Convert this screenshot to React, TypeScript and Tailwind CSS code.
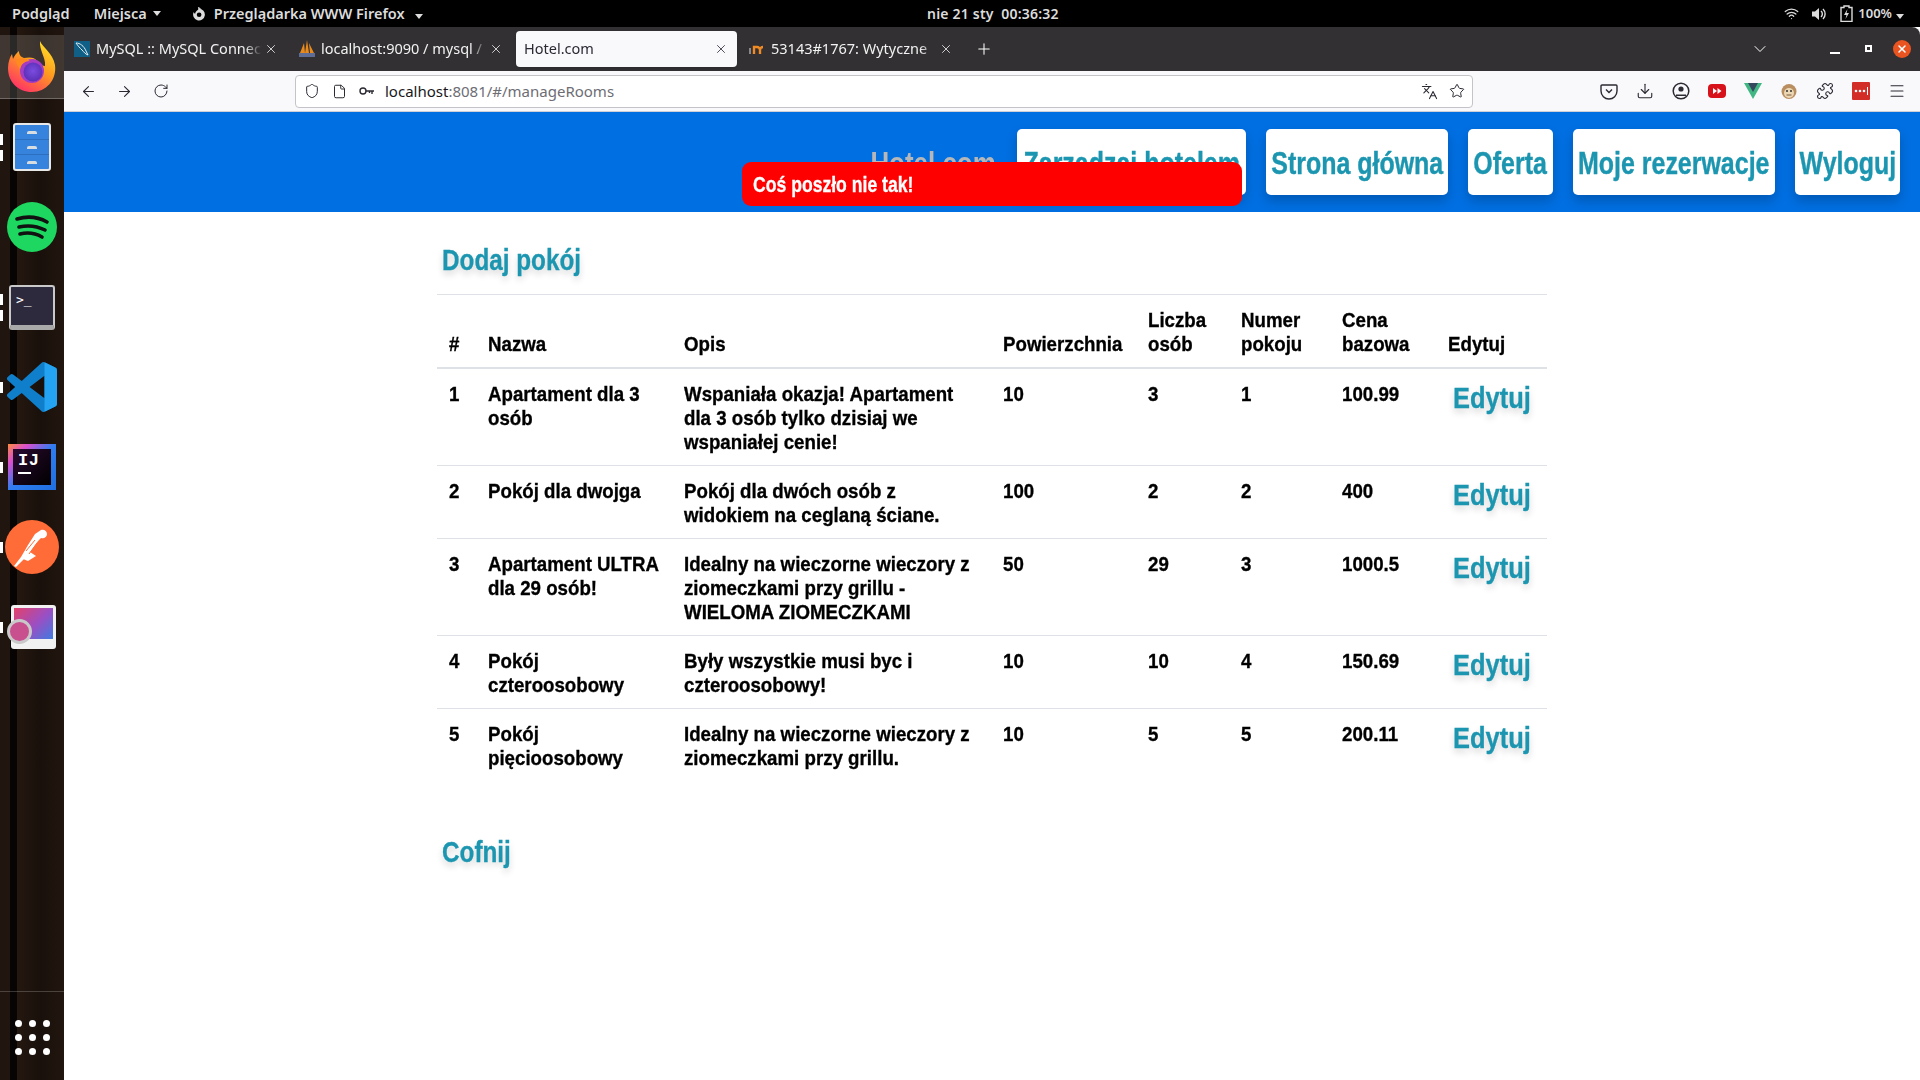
import React from 'react';
import { ArrowLeft, ArrowRight, RotateCw, Shield, File, Star, Languages, Download, Puzzle, Menu, X, Plus, ChevronDown, Wifi } from 'lucide-react';

const rooms = [
  { id: 1, name: 'Apartament dla 3 osób', desc: 'Wspaniała okazja! Apartament dla 3 osób tylko dzisiaj we wspaniałej cenie!', area: '10', people: '3', no: '1', price: '100.99' },
  { id: 2, name: 'Pokój dla dwojga', desc: 'Pokój dla dwóch osób z widokiem na ceglaną ściane.', area: '100', people: '2', no: '2', price: '400' },
  { id: 3, name: 'Apartament ULTRA dla 29 osób!', desc: 'Idealny na wieczorne wieczory z ziomeczkami przy grillu - WIELOMA ZIOMECZKAMI', area: '50', people: '29', no: '3', price: '1000.5' },
  { id: 4, name: 'Pokój czteroosobowy', desc: 'Były wszystkie musi byc i czteroosobowy!', area: '10', people: '10', no: '4', price: '150.69' },
  { id: 5, name: 'Pokój pięcioosobowy', desc: 'Idealny na wieczorne wieczory z ziomeczkami przy grillu.', area: '10', people: '5', no: '5', price: '200.11' },
];

const navItems = [
  { label: 'Zarządzaj hotelem', width: 'w-[229px]' },
  { label: 'Strona główna', width: 'w-[182px]' },
  { label: 'Oferta', width: 'w-[85px]' },
  { label: 'Moje rezerwacje', width: 'w-[202px]' },
  { label: 'Wyloguj', width: 'w-[105px]' },
];

const Caret = () => <span className="inline-block w-0 h-0 border-x-[4px] border-x-transparent border-t-[5px] border-t-[#dddddd]" />;

const DockSlot = ({ children, marks = 0 }: { children: React.ReactNode; marks?: number }) => (
  <div className="relative h-[80px] flex items-center justify-center shrink-0">
    {marks > 0 && (
      <div className="absolute left-0 top-0 bottom-0 flex flex-col justify-center gap-[5px]">
        {Array.from({ length: marks }).map((_, i) => <span key={i} className="block w-[3px] h-[11px] bg-white" />)}
      </div>
    )}
    {children}
  </div>
);

const FirefoxLogo = () => (
  <svg width="52" height="54" viewBox="0 0 52 54">
    <defs>
      <linearGradient id="ffa" x1="0.8" y1="0" x2="0.2" y2="1"><stop offset="0" stopColor="#ffe226" /><stop offset="0.45" stopColor="#ff9a1f" /><stop offset="1" stopColor="#ff2a6d" /></linearGradient>
      <radialGradient id="ffb" cx="0.5" cy="0.45" r="0.55"><stop offset="0" stopColor="#7b4ce0" /><stop offset="1" stopColor="#5b2fb5" /></radialGradient>
    </defs>
    <path d="M34 1c2 6 13 12 15 24 2 15-9 27-23 27C12 52 2 42 2 28c0-6 2-11 4-14l1 5c2-5 6-8 6-8 0 4 2 6 5 7 5-1 11-1 13 3-6-4-9 2-9 2l17 3C40 18 33 10 34 1z" fill="url(#ffa)" />
    <circle cx="26" cy="31" r="12" fill="#a63bc4" />
    <circle cx="27" cy="32" r="9.5" fill="url(#ffb)" />
    <path d="M10 20c6-3 10-2 14 1-5 0-9 3-10 8-2-3-4-5-4-9z" fill="#ff8a1f" />
  </svg>
);

const FilesIcon = () => (
  <div className="w-[38px] h-[48px] rounded-[3px] bg-[#3583dd] border-2 border-[#e8e8e8] flex flex-col">
    {[0, 1, 2].map(i => (
      <div key={i} className="flex-1 flex items-center justify-center border-b border-[#2c6fc0] last:border-b-0">
        <span className="block w-[10px] h-[3px] rounded-t-[2px] bg-[#d8dde2]" />
      </div>
    ))}
  </div>
);

const SpotifyIcon = () => (
  <svg width="50" height="50" viewBox="0 0 50 50">
    <circle cx="25" cy="25" r="25" fill="#1ed760" />
    <path d="M10 17c10-3 21-2 30 3M12 25c9-2 18-1 26 3M13 32c8-2 15-1 22 3" fill="none" stroke="#111" strokeWidth="3.6" strokeLinecap="round" />
  </svg>
);

const TerminalIcon = () => (
  <div className="w-[46px] h-[45px] rounded-[3px] bg-[#2c2a3c] border-2 border-[#c9c9c9] border-b-[5px] border-b-[#a9a9a9] pl-[5px] pt-[3px] leading-none">
    <span className="text-white text-[13px] font-['DejaVu_Sans_Mono',monospace]">&gt;_</span>
  </div>
);

const VsCodeIcon = () => (
  <svg width="50" height="50" viewBox="0 0 100 100">
    <path d="M70.9 99.3a6.2 6.2 0 0 0 5-.2l20.6-9.9a6.2 6.2 0 0 0 3.500-5.600V16.400a6.200 6.200 0 0 0-3.500-5.600L75.900.9a6.200 6.200 0 0 0-7.100 1.200L29.400 38 12.200 25a4.200 4.200 0 0 0-5.300.2l-5.500 5a4.200 4.200 0 0 0 0 6.200L16.300 50 1.400 63.600a4.200 4.200 0 0 0 0 6.200l5.500 5a4.200 4.200 0 0 0 5.300.2l17.200-13 39.400 36a6.200 6.200 0 0 0 2.100 1.300zM75 27.300 45.100 50 75 72.700z" fill="#0f7fcb" fillRule="evenodd" />
    <path d="M75 0.500l21.500 10.300a6.200 6.200 0 0 1 3.500 5.600v67.200a6.200 6.200 0 0 1-3.500 5.600L75 99.500z" fill="#24a3f2" />
  </svg>
);

const IdeaIcon = () => (
  <div className="w-[48px] h-[46px] p-[5px] bg-[linear-gradient(135deg,#ff8a3d_0%,#d94fd0_22%,#2f7df0_50%,#1f6fe0_100%)]">
    <div className="w-full h-full bg-[linear-gradient(135deg,#2a0a30,#000000)] pl-[5px] pt-[3px] flex flex-col">
      <span className="text-white text-[17px] leading-[17px] font-bold tracking-[0.5px] font-['Liberation_Mono',monospace]">IJ</span>
      <span className="block w-[13px] h-[2px] bg-white mt-[3px]" />
    </div>
  </div>
);

const PostmanIcon = () => (
  <svg width="54" height="54" viewBox="0 0 54 54">
    <circle cx="27" cy="27" r="27" fill="#ff6c37" />
    <path d="M36 10c3-1 6 1 6 4s-3 5-6 4l-3 3-10 14-9 9-3 3-2-1 7-9 7-12 7-11z" fill="#ffffff" />
    <path d="M25 32l6 4-8 5-5-2z" fill="#ffffff" />
    <path d="M21 31l9-11M24 34l8-11" stroke="#ff6c37" strokeWidth="1" />
  </svg>
);

const ShotIcon = () => (
  <div className="relative w-[46px] h-[44px] ml-[1px]">
    <div className="absolute right-0 top-0 w-[45px] h-[44px] rounded-[3px] bg-[#f1f1f1] p-[3px] pb-[10px]">
      <div className="w-full h-full bg-[linear-gradient(135deg,#e4416a,#9a4fc4_55%,#3f7be0)]" />
    </div>
    <div className="absolute -left-[3px] top-[14px] w-[25px] h-[25px] rounded-full bg-[#c8508f] border-[3px] border-[#c9c9c9]" />
  </div>
);

const BrowserTab = ({ title, icon, active = false }: { title: string; icon?: React.ReactNode; active?: boolean }) => (
  <div className={`w-[221px] h-[36px] rounded-[4px] flex items-center pl-2 pr-[9px] gap-[6px] shrink-0 ${active ? 'bg-[#f9f9fb] text-[#2b2a33] shadow-sm' : 'text-[#f2f2f2]'}`}>
    {icon && <span className="w-4 h-4 shrink-0 flex items-center justify-center">{icon}</span>}
    <span className="flex-1 min-w-0 -mr-[4px] whitespace-nowrap overflow-hidden text-[14.5px] font-['Noto_Sans',sans-serif] [mask-image:linear-gradient(90deg,#000_90%,transparent)]">{title}</span>
    <X size={14} strokeWidth={1.4} className="shrink-0" />
  </div>
);

const MysqlFav = () => (
  <svg width="16" height="16" viewBox="0 0 16 16">
    <rect width="16" height="16" fill="#0f5f86" />
    <path d="M2 2c4 0 8 3 10 8l2 4c-3-1-4-3-6-5C6 7 4 5 2 2z" fill="none" stroke="#e6eef3" strokeWidth="1" />
  </svg>
);

const PmaFav = () => (
  <svg width="16" height="18" viewBox="0 0 16 18">
    <path d="M1 13 5 3l1 10zM6 13 8 0l2 13zM11 13l-1-10 5 10z" fill="#e98a1d" />
    <rect x="0" y="13" width="16" height="4" fill="#5d6d96" />
  </svg>
);

const MoodleFav = () => (
  <svg width="16" height="12" viewBox="0 0 16 12">
    <path d="M1 11V5" stroke="#888" strokeWidth="2" />
    <path d="M5 11V4h3a3 3 0 0 1 3 3v4M11 11V7a3 3 0 0 1 3-3" fill="none" stroke="#f08a24" strokeWidth="2.4" />
  </svg>
);

const tool = 'text-[#2b2a33] shrink-0';

// the site's condensed font isn't installed, so the text gets squeezed
const Squeezed = ({ children }: { children: React.ReactNode }) => (
  <div className="w-[112.36%] origin-left scale-x-[0.89]">{children}</div>
);

const PageLink = ({ children, className = '' }: { children: React.ReactNode; className?: string }) => (
  <a className={`block w-fit ml-[5px] origin-left font-bold text-[#1c96b0] whitespace-nowrap [-webkit-text-stroke:0.3px] [text-shadow:0_4px_8px_rgba(0,0,0,0.18)] ${className}`}>{children}</a>
);

const App = () => {
  const sans = "font-['Noto_Sans',sans-serif]";
  const narrow = "font-['Liberation_Sans',sans-serif]";

  return (
    <div className="w-screen h-screen overflow-hidden flex flex-col bg-black">
      {/* ubuntu top bar */}
      <div className={`h-[27px] shrink-0 bg-black text-[#dcdcdc] text-[14.5px] font-semibold relative flex items-center ${sans}`}>
        <span className="ml-3">Podgląd</span>
        <span className="ml-[24px] flex items-center gap-[6px]">Miejsca <Caret /></span>
        <span className="ml-[30px] flex items-center gap-[7px]">
          <svg width="16" height="16" viewBox="0 0 15 15"><path d="M7.5 2.5a5.5 5.5 0 1 1-5 3.2c.3 1 .9 1.4 1.4 1.6.2-1.7 1.3-3 2.8-3.8.2-1 .1-2-.3-2.6 1.4.3 2.4.9 3 1.8a4 4 0 0 0-1.9-.2z" fill="#dcdcdc" /><circle cx="7.6" cy="8.2" r="2.2" fill="#000" /></svg>
          Przeglądarka WWW Firefox
          <span className="ml-[3px]"><Caret /></span>
        </span>
        <span className="absolute left-[927px] text-[14px] tracking-[0.2px]">nie 21 sty&nbsp;&nbsp;00:36:32</span>
        <div className="ml-auto mr-[16px] flex items-center">
          <Wifi size={15} strokeWidth={2} />
          <svg width="16" height="16" viewBox="0 0 16 16" className="ml-[12px]"><path d="M1 5.500h3L8 2v12l-4-3.500H1z" fill="#dcdcdc" /><path d="M10 5a4 4 0 0 1 0 6M12 3a7 7 0 0 1 0 10" fill="none" stroke="#dcdcdc" strokeWidth="1.400" /></svg>
          <svg width="13" height="17" viewBox="0 0 13 17" className="ml-[13px]"><path d="M4 1h5v1.500h3v14H1v-14h3z" fill="none" stroke="#dcdcdc" strokeWidth="1.400" /><path d="M7.500 4 4 10h2.500L5.500 14 9 8H6.500z" fill="#dcdcdc" /></svg>
          <span className="ml-[5px] text-[13px]">100%</span>
          <span className="ml-[4px]"><Caret /></span>
        </div>
      </div>

      <div className="flex-1 min-h-0 flex">
        {/* dock */}
        <div className="w-[64px] shrink-0 relative flex flex-col bg-[linear-gradient(90deg,#20150f_0px,#20150f_10px,#070403_10px,#070403_17px,#241810_17px,#1a100b_40px,#21160f_64px)]">
          <div className="absolute left-0 right-0 top-[8px] h-[64px] bg-white/15 border-b border-white/25" />
          <DockSlot marks={0}><span className="relative"><FirefoxLogo /></span></DockSlot>
          <DockSlot marks={2}><FilesIcon /></DockSlot>
          <DockSlot><SpotifyIcon /></DockSlot>
          <DockSlot marks={2}><TerminalIcon /></DockSlot>
          <DockSlot marks={1}><VsCodeIcon /></DockSlot>
          <DockSlot marks={1}><IdeaIcon /></DockSlot>
          <DockSlot marks={1}><PostmanIcon /></DockSlot>
          <DockSlot marks={1}><ShotIcon /></DockSlot>
          <div className="mt-auto border-t border-white/20 h-[89px] flex items-start justify-center pt-[28px]">
            <div className="grid grid-cols-3 gap-x-[7px] gap-y-[7px]">
              {Array.from({ length: 9 }).map((_, i) => <span key={i} className="block w-[7px] h-[7px] rounded-full bg-white" />)}
            </div>
          </div>
        </div>

        <div className="flex-1 min-w-0 flex flex-col bg-white">
          {/* tab strip */}
          <div className="h-[44px] shrink-0 bg-[#323032] rounded-tr-[8px] flex items-center pl-[2px] gap-1 text-white">
            <BrowserTab title="MySQL :: MySQL Connectors" icon={<MysqlFav />} />
            <BrowserTab title="localhost:9090 / mysql / hotel" icon={<PmaFav />} />
            <BrowserTab title="Hotel.com" active />
            <BrowserTab title="53143#1767: Wytyczne" icon={<MoodleFav />} />
            <Plus size={18} strokeWidth={1.4} className="ml-[9px]" />
            <ChevronDown size={20} strokeWidth={1.2} className="ml-auto mr-[56px]" />
            <span className="flex items-center mr-[9px]">
              <span className="block w-[10px] h-[2px] bg-white mt-[7px]" />
              <span className="block w-[7px] h-[7px] border-2 border-white ml-[25px] -mt-[1px]" />
              <span className="w-[18px] h-[18px] rounded-full bg-[#e95420] ml-[21px] flex items-center justify-center"><X size={12} strokeWidth={3} /></span>
            </span>
          </div>

          {/* toolbar */}
          <div className="h-[41px] shrink-0 bg-[#f9f9fb] border-b border-[#cfcfd8] flex items-center">
            <ArrowLeft size={17} strokeWidth={1.5} className={`${tool} ml-[16px]`} />
            <ArrowRight size={17} strokeWidth={1.5} className={`${tool} ml-[19px]`} />
            <RotateCw size={16} strokeWidth={1.5} className={`${tool} ml-[20px]`} />
            <div className="ml-[126px] w-[1178px] h-[33px] bg-white border border-[#c4c4c8] rounded-[4px] flex items-center pl-[8px] pr-[7px]">
              <Shield size={16} strokeWidth={1.5} className={tool} />
              <File size={15} strokeWidth={1.6} className={`${tool} ml-[12px]`} />
              <svg width="16" height="10" viewBox="0 0 16 10" className="ml-[12px] shrink-0"><circle cx="4" cy="5" r="3" fill="none" stroke="#2b2a33" strokeWidth="1.4" /><path d="M7 5h8M13 5v3M10.500 5v2" fill="none" stroke="#2b2a33" strokeWidth="1.4" /></svg>
              <span className={`ml-[10px] text-[15px] text-[#6d6d74] ${sans}`}><span className="text-[#18181b]">localhost</span>:8081/#/manageRooms</span>
              <Languages size={17} strokeWidth={1.5} className={`${tool} ml-auto`} />
              <Star size={16} strokeWidth={1.5} className={`${tool} ml-[11px]`} />
            </div>
            <div className="ml-[127px] flex items-center gap-[18px]">
              <svg width="18" height="18" viewBox="0 0 18 18" className="shrink-0"><path d="M2 3h14a1 1 0 0 1 1 1v5a8 8 0 0 1-16 0V4a1 1 0 0 1 1-1z" fill="none" stroke="#2b2a33" strokeWidth="1.4" /><path d="M6 7.5l3 3 3-3" fill="none" stroke="#2b2a33" strokeWidth="1.4" /></svg>
              <Download size={18} strokeWidth={1.5} className={tool} />
              <svg width="18" height="18" viewBox="0 0 18 18" className="shrink-0"><circle cx="9" cy="9" r="7.800" fill="none" stroke="#2b2a33" strokeWidth="1.5" /><circle cx="9" cy="7" r="2.600" fill="#2b2a33" /><path d="M4 12.500h10v1.500H4z" fill="#2b2a33" /></svg>
              <svg width="18" height="14" viewBox="0 0 18 14" className="shrink-0"><rect width="18" height="14" rx="4" fill="#d8121b" /><path d="M5 4l4 3-4 3zM9.500 4l4 3-4 3z" fill="#fff" /></svg>
              <svg width="18" height="16" viewBox="0 0 18 16" className="shrink-0"><path d="M0 0h18L9 16z" fill="#41b883" /><path d="M4 0h10L9 9z" fill="#34495e" /></svg>
              <svg width="18" height="18" viewBox="0 0 18 18" className="shrink-0"><circle cx="9" cy="9.500" r="7.500" fill="#b98f62" /><ellipse cx="9" cy="11" rx="5" ry="5" fill="#ecd7b5" /><circle cx="7" cy="9" r="1" fill="#333" /><circle cx="11" cy="9" r="1" fill="#333" /><path d="M6.500 13h5" stroke="#7a5a3a" /></svg>
              <Puzzle size={18} strokeWidth={1.5} className={tool} />
              <svg width="18" height="18" viewBox="0 0 18 18" className="shrink-0"><rect width="18" height="18" rx="1" fill="#d32d27" /><circle cx="4" cy="9" r="1.300" fill="#fff" /><circle cx="8" cy="9" r="1.300" fill="#fff" /><circle cx="12" cy="9" r="1.300" fill="#fff" /><rect x="15" y="5" width="1" height="8" fill="#fff" /></svg>
              <Menu size={18} strokeWidth={1.4} className={tool} />
            </div>
          </div>

          {/* page */}
          <div className={`flex-1 min-h-0 relative bg-white ${narrow}`}>
            <header className="h-[100px] bg-[#006fe2] flex items-center justify-end gap-5 pr-5">
              <span className="pt-[2px] text-[32px] font-bold text-[#b7b7b7] mr-px origin-right scale-x-[0.81]">Hotel.com</span>
              {navItems.map(item => (
                <button key={item.label} className={`${item.width} h-[66px] pt-[2px] bg-white rounded-[5px] text-[32px] font-bold text-[#1c96b0] flex items-center justify-center shadow-[0_6px_12px_rgba(0,0,0,0.2)]`}>
                  <span className="shrink-0 whitespace-nowrap scale-x-[0.78] [-webkit-text-stroke:0.4px]">{item.label}</span>
                </button>
              ))}
            </header>

            <div className="absolute left-[678px] top-[50px] w-[500px] h-[44px] bg-[#ff0000] rounded-[9px] pl-[11px] flex items-center text-white text-[22px] font-bold">
              <span className="origin-left scale-x-[0.8] whitespace-nowrap [-webkit-text-stroke:0.3px]">Coś poszło nie tak!</span>
            </div>

            <main className="w-[1110px] mx-auto pt-[26px]">
              <PageLink className="h-[44px] leading-[44px] text-[30px] scale-x-[0.81]">Dodaj pokój</PageLink>
              <table className="w-full table-fixed border-collapse mt-[12px] text-black text-[21px] leading-[24px] font-bold [-webkit-text-stroke:0.35px]">
                <colgroup>
                  <col className="w-[39px]" />
                  <col className="w-[196px]" />
                  <col className="w-[319px]" />
                  <col className="w-[145px]" />
                  <col className="w-[93px]" />
                  <col className="w-[101px]" />
                  <col className="w-[106px]" />
                  <col className="w-[111px]" />
                </colgroup>
                <thead>
                  <tr className="border-t border-[#dee2e6] border-b-2 border-b-[#dee2e6]">
                    {['#', 'Nazwa', 'Opis', 'Powierzchnia', 'Liczba osób', 'Numer pokoju', 'Cena bazowa', 'Edytuj'].map(h => (
                      <th key={h} className="px-3 pt-[13px] pb-[11px] text-left align-bottom font-bold"><Squeezed>{h}</Squeezed></th>
                    ))}
                  </tr>
                </thead>
                <tbody>
                  {rooms.map(r => (
                    <tr key={r.id} className="border-b border-[#dee2e6] last:border-b-0 align-top">
                      {[r.id, r.name, r.desc, r.area, r.people, r.no, r.price].map((v, i) => (
                        <td key={i} className="px-3 pt-[13px] pb-[11px]"><Squeezed>{v}</Squeezed></td>
                      ))}
                      <td className="px-3 pt-[13px] pb-[11px]">
                        <PageLink className="h-[24px] leading-[32px] text-[30px] scale-x-[0.85]">Edytuj</PageLink>
                      </td>
                    </tr>
                  ))}
                </tbody>
              </table>
              <PageLink className="mt-[49px] h-[44px] leading-[44px] text-[30px] scale-x-[0.81]">Cofnij</PageLink>
            </main>
          </div>
        </div>
      </div>
    </div>
  );
};

export default App;
